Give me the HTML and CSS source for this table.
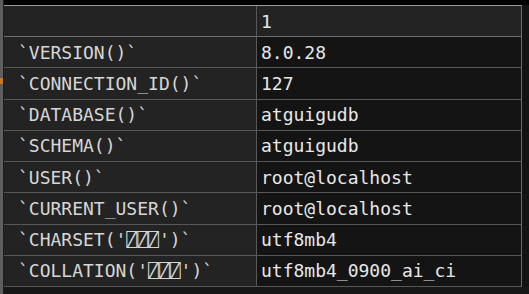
FILE: index.html
```html
<!DOCTYPE html>
<html>
<head>
<meta charset="utf-8">
<link rel="stylesheet" href="styles.css">
</head>
<body>
<div class="app">
  <div class="gutter"><span class="marker"></span></div>
  <div class="main">
    <div class="topbar"></div>
    <div class="grid">
      <div class="row head"><div class="cell key"></div><div class="cell val">1</div></div>
      <div class="row"><div class="cell key">`VERSION()`</div><div class="cell val">8.0.28</div></div>
      <div class="row"><div class="cell key">`CONNECTION_ID()`</div><div class="cell val">127</div></div>
      <div class="row"><div class="cell key">`DATABASE()`</div><div class="cell val">atguigudb</div></div>
      <div class="row"><div class="cell key">`SCHEMA()`</div><div class="cell val">atguigudb</div></div>
      <div class="row"><div class="cell key">`USER()`</div><div class="cell val">root@localhost</div></div>
      <div class="row"><div class="cell key">`CURRENT_USER()`</div><div class="cell val">root@localhost</div></div>
      <div class="row"><div class="cell key">`CHARSET('⍁⍁⍁')`</div><div class="cell val">utf8mb4</div></div>
      <div class="row"><div class="cell key">`COLLATION('⍁⍁⍁')`</div><div class="cell val">utf8mb4_0900_ai_ci</div></div>
    </div>
    <div class="rest"></div>
  </div>
</div>
</body>
</html>
```
FILE: styles.css
```css
html, body {
  margin: 0;
  padding: 0;
  background: #131313;
  width: 529px;
  height: 294px;
  overflow: hidden;
}
.app {
  display: flex;
  height: 294px;
  font-family: "DejaVu Sans Mono", "Liberation Mono", monospace;
  font-size: 18px;
}
.gutter {
  position: relative;
  width: 3px;
  background: #5e5e5e;
  border-right: 1px solid #1c1c1c;
  flex: none;
}
.marker {
  position: absolute;
  left: 0;
  top: 78px;
  width: 3px;
  height: 6px;
  background: #c8782a;
}
.main {
  flex: 1;
  display: flex;
  flex-direction: column;
}
.topbar {
  height: 5px;
  background: #000;
}
.grid {
  width: 517px;
  border-top: 1px solid #9c9c9c;
  border-right: 1px solid #6a6a6a;
  background: #141414;
}
.row {
  display: grid;
  grid-template-columns: 253px 1fr;
  height: 30.25px;
  border-bottom: 1px solid #575757;
}
.row.head {
  height: 30px;
  border-bottom-color: #6e6e6e;
}
.cell {
  display: flex;
  align-items: center;
  white-space: nowrap;
  overflow: hidden;
}
.key {
  background: #232323;
  color: #d6d6d6;
  padding-left: 14px;
  border-right: 1px solid #585858;
}
.val {
  background: #141414;
  color: #e8e8e8;
  padding-left: 4px;
}
.head .val {
  background: #232323;
}
.rest {
  flex: 1;
  background: #171717;
}
```
